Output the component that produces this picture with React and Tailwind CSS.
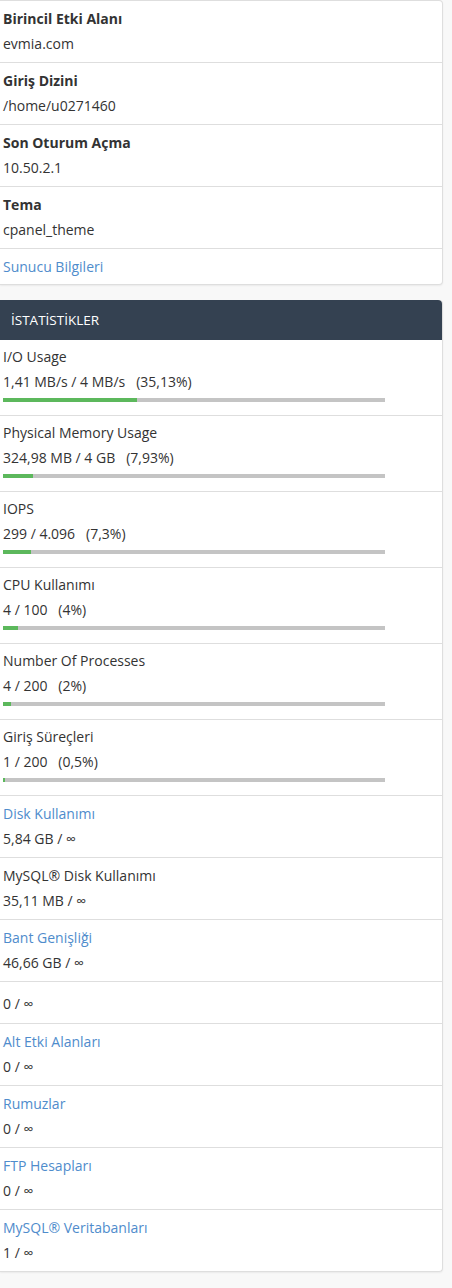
const font = { fontFamily: '"Open Sans", "Noto Sans", sans-serif' };

const info = [
  { label: 'Birincil Etki Alanı', value: 'evmia.com' },
  { label: 'Giriş Dizini', value: '/home/u0271460' },
  { label: 'Son Oturum Açma', value: '10.50.2.1' },
  { label: 'Tema', value: 'cpanel_theme' },
];

const bars = [
  { label: 'I/O Usage', value: '1,41 MB/s / 4 MB/s', pct: '(35,13%)', w: 35.13 },
  { label: 'Physical Memory Usage', value: '324,98 MB / 4 GB', pct: '(7,93%)', w: 7.93 },
  { label: 'IOPS', value: '299 / 4.096', pct: '(7,3%)', w: 7.3 },
  { label: 'CPU Kullanımı', value: '4 / 100', pct: '(4%)', w: 4 },
  { label: 'Number Of Processes', value: '4 / 200', pct: '(2%)', w: 2 },
  { label: 'Giriş Süreçleri', value: '1 / 200', pct: '(0,5%)', w: 0.5 },
];

const simple = [
  { label: 'Disk Kullanımı', value: '5,84 GB / ∞', link: true },
  { label: 'MySQL® Disk Kullanımı', value: '35,11 MB / ∞' },
  { label: 'Bant Genişliği', value: '46,66 GB / ∞', link: true },
  { label: '', value: '0 / ∞' },
  { label: 'Alt Etki Alanları', value: '0 / ∞', link: true },
  { label: 'Rumuzlar', value: '0 / ∞', link: true },
  { label: 'FTP Hesapları', value: '0 / ∞', link: true },
  { label: 'MySQL® Veritabanları', value: '1 / ∞', link: true },
];

export default function App() {
  return (
    <div className="min-h-[1288px] bg-[#f8f8f8] text-[14px] text-[#333]" style={font}>
      <div className="w-[443px] bg-white border-t border-r border-b border-[#dedede] rounded-r-[4px] shadow-[0_1px_2px_rgba(0,0,0,0.06)]">
        {info.map((r) => (
          <div key={r.label} className="pl-[3px] pt-[6px] pb-[5px] border-b border-[#dedede]">
            <div className="font-bold leading-[24px]">{r.label}</div>
            <div className="leading-[26px]">{r.value}</div>
          </div>
        ))}
        <div className="pl-[3px] pt-[6px] pb-[5px] leading-[24px] text-[#4f8ccc]">Sunucu Bilgileri</div>
      </div>

      <div className="mt-[15px] w-[443px] bg-white border-r border-b border-[#dedede] rounded-r-[4px] shadow-[0_1px_2px_rgba(0,0,0,0.06)]">
        <div className="h-[40px] bg-[#344151] rounded-tr-[4px] flex items-center pl-[11px] text-white text-[13.5px]">
          İSTATİSTİKLER
        </div>
        {bars.map((r) => (
          <div key={r.label} className="pl-[3px] pt-[5px] pb-[13px] border-b border-[#dedede]">
            <div className="leading-[24px]">{r.label}</div>
            <div className="leading-[26px] whitespace-pre">{r.value}{'   '}{r.pct}</div>
            <div className="mt-[3px] w-[382px] h-[4px] bg-[#c4c4c4]">
              <div className="h-full bg-[#5cb85c]" style={{ width: `${r.w}%` }} />
            </div>
          </div>
        ))}
        {simple.map((r, i) => (
          <div
            key={i}
            className={`pl-[3px] ${i < simple.length - 1 ? 'border-b border-[#dedede]' : ''} ${r.label ? 'pt-[6px] pb-[5px]' : 'pt-[9px] pb-[6px]'}`}
          >
            {r.label && <div className={`leading-[24px] ${r.link ? 'text-[#4f8ccc]' : ''}`}>{r.label}</div>}
            <div className="leading-[26px]">{r.value}</div>
          </div>
        ))}
      </div>
    </div>
  );
}
